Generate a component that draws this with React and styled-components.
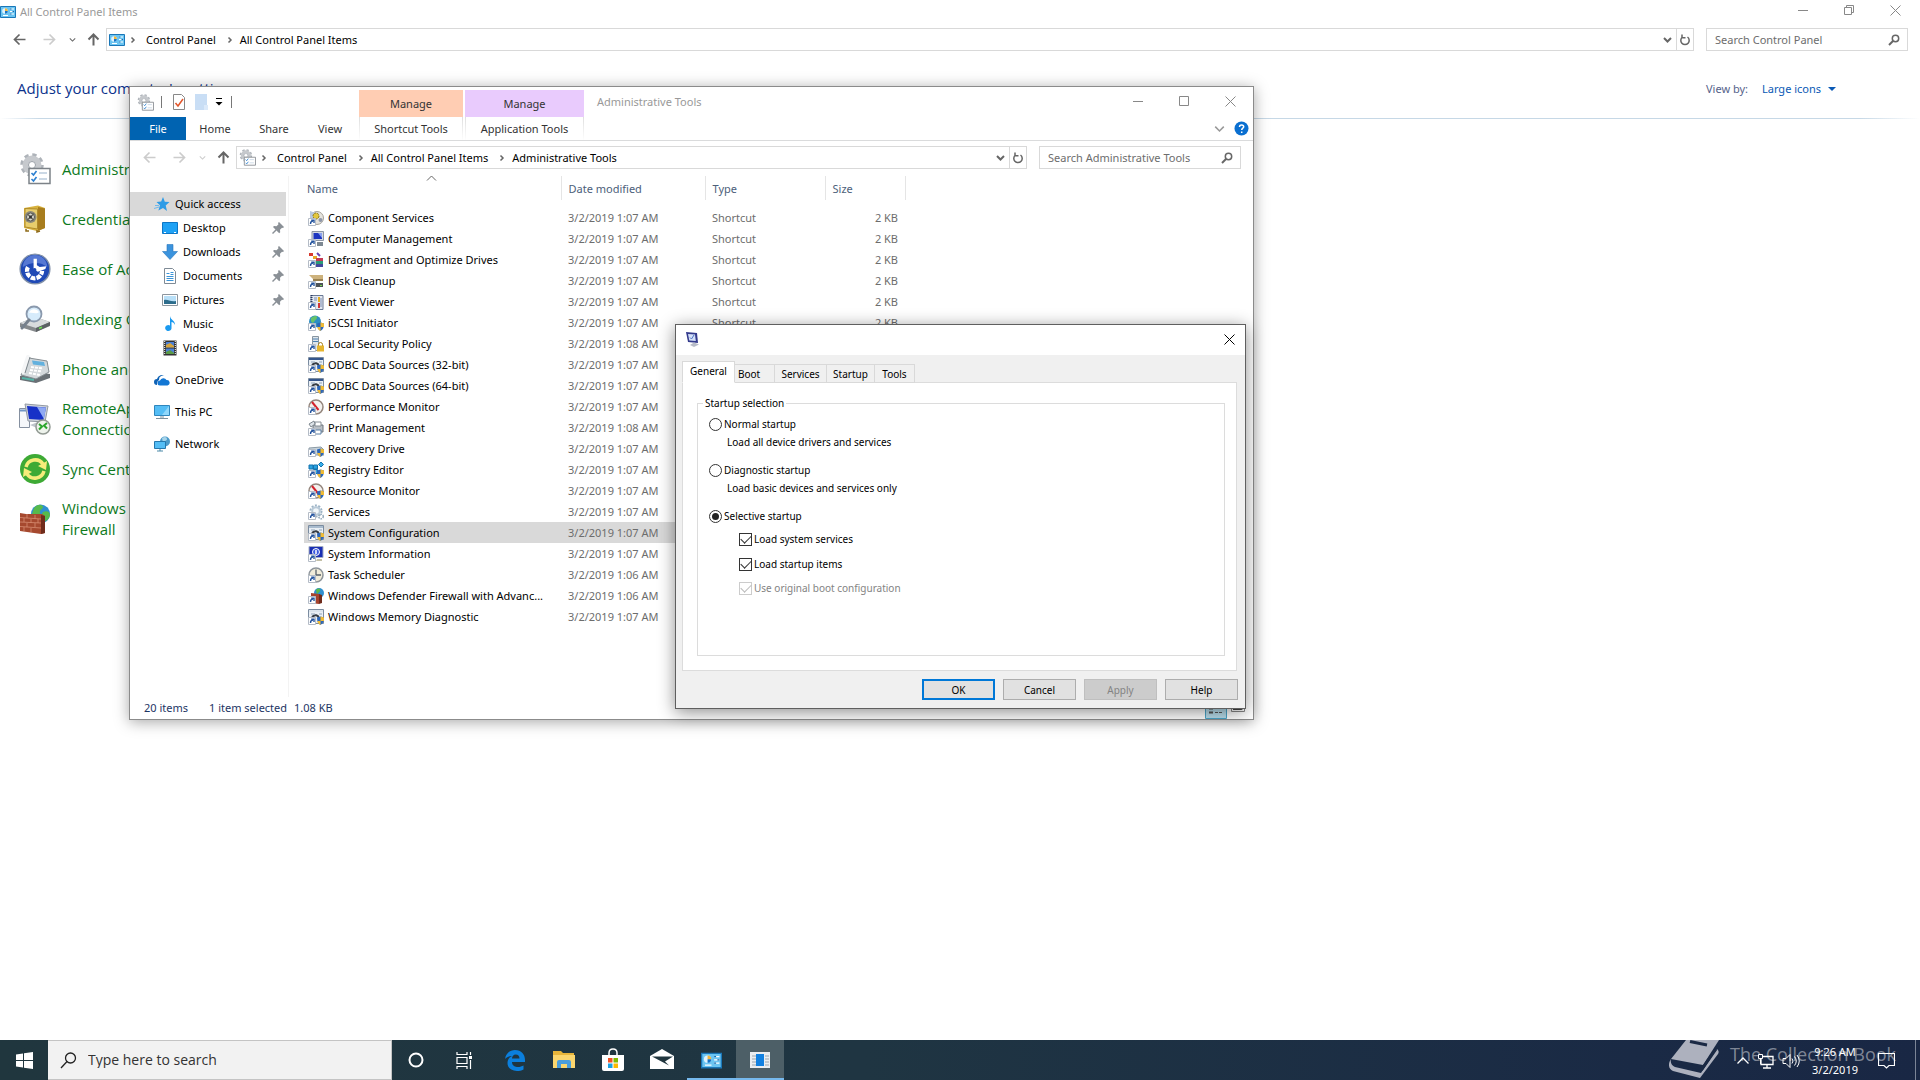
import React from 'react';
import styled, { createGlobalStyle } from 'styled-components';

const GlobalStyle = createGlobalStyle`
    * {
        box-sizing: border-box;
    }
    body {
        margin: 0;
        background: #fff;
        color: #000;
        font-family: "Noto Sans", "Open Sans", sans-serif;
        font-size: 11px;
        line-height: 16px;
    }
    button, input, select {
        font: inherit;
        color: inherit;
        padding: 0;
        margin: 0;
        border: 0;
        background: none;
    }
    svg {
        display: block;
        flex: none;
    }
`;

/* ---------- layout ---------- */

const Desktop = styled.div`
    position: relative;
    display: flex;
    flex-direction: column;
    min-height: 100vh;
    overflow: hidden;
`;

const ControlPanel = styled.main`
    flex: 1;
    display: flex;
    flex-direction: column;
`;

const TitleBar = styled.header`
    display: flex;
    align-items: center;
    height: ${props => props.$height}px;
    gap: 4px;
    color: #999;
`;

const TitleText = styled.h1`
    flex: 1;
    margin: 0;
    font-size: 11px;
    font-weight: 400;
`;

const Caption = styled.div`
    display: flex;
    align-self: flex-start;
    margin-right: ${props => props.$right || 0}px;
`;

const CaptionButton = styled.button`
    display: flex;
    align-items: center;
    justify-content: center;
    width: ${props => props.$width || 46}px;
    height: ${props => props.$height || 30}px;
    color: ${props => props.$dark ? '#000' : '#888'};
`;

const AddressRow = styled.div`
    display: flex;
    align-items: center;
    padding: 5px 12px 0 4px;
`;

const ArrowButton = styled.button`
    display: flex;
    align-items: center;
    justify-content: center;
    width: ${props => props.$width}px;
    height: 22px;
    color: ${props => props.$off ? '#ccc' : '#666'};
`;

const AddressBox = styled.nav`
    flex: 1;
    display: flex;
    align-items: center;
    height: 23px;
    padding-left: 2px;
    border: 1px solid #d9d9d9;
`;

const Crumbs = styled.div`
    flex: 1;
    display: flex;
    align-items: center;
    color: #666;
    svg + svg {
        margin: 0 3px 0 4px;
    }
`;

const Crumb = styled.a`
    display: flex;
    align-items: center;
    color: #000;
    text-decoration: none;
    padding: 0 10px 0 6px;
`;

const BoxButton = styled.button`
    display: flex;
    align-items: center;
    justify-content: center;
    width: 17px;
    height: 21px;
    color: #666;
    border-left: ${props => props.$line ? '1px solid #d9d9d9' : '0'};
`;

const SearchBox = styled.label`
    display: flex;
    align-items: center;
    width: 202px;
    height: 23px;
    margin-left: 12px;
    padding: 0 7px 0 8px;
    border: 1px solid #d9d9d9;
    color: #666;
`;

const SearchInput = styled.input`
    flex: 1;
    min-width: 0;
    outline: 0;
    &::placeholder {
        color: ${props => props.$color || '#6d6d6d'};
        opacity: 1;
    }
`;

const Heading = styled.div`
    display: flex;
    align-items: center;
    padding: 23px 84px 16px 17px;
`;

const Adjust = styled.h2`
    flex: 1;
    margin: 0;
    font-family: "Open Sans", sans-serif;
    font-size: 15px;
    line-height: 28px;
    font-weight: 400;
    color: #0b328c;
`;

const ViewLabel = styled.label`
    display: flex;
    align-items: center;
    gap: 14px;
    padding-top: 2px;
    color: #55628a;
`;

const ViewSelect = styled.select`
    appearance: none;
    width: 66px;
    color: #0a59b5;
    outline: 0;
`;

const Caret = styled.span`
    border: 4px solid transparent;
    border-top-color: #0a59b5;
    border-bottom: 0;
    margin-left: -14px;
`;

const Rule = styled.div`
    height: 1px;
    background: linear-gradient(to right, #fff, #c6d8e6 40px, #c6d8e6 calc(100% - 60px), #fff);
`;

const Items = styled.ul`
    display: flex;
    flex-direction: column;
    margin: 25px 0 0 19px;
    padding: 0;
    list-style: none;
`;

const Item = styled.a`
    display: flex;
    align-items: center;
    gap: 11px;
    width: 220px;
    height: 50px;
    font-family: "Open Sans", sans-serif;
    font-size: 15px;
    line-height: 21px;
    color: #0e7a1d;
    text-decoration: none;
`;

/* ---------- explorer window ---------- */

const ExplorerWindow = styled.section`
    position: absolute;
    left: 129px;
    top: 86px;
    width: 1125px;
    height: 634px;
    display: flex;
    flex-direction: column;
    background: #fff;
    border: 1px solid #8b8b8b;
    box-shadow: 0 2px 14px rgba(0, 0, 0, 0.35);
`;

const Ribbon = styled.div`
    display: flex;
    height: 54px;
    border-bottom: 1px solid #dadbdc;
`;

const RibbonLeft = styled.div`
    display: flex;
    flex-direction: column;
    width: 229px;
`;

const QuickBar = styled.div`
    display: flex;
    align-items: center;
    height: 30px;
    padding-left: 7px;
`;

const Divider = styled.span`
    width: 1px;
    height: 12px;
    margin: 0 ${props => props.$gap}px 0 7px;
    background: #777;
`;

const RibbonTabs = styled.div`
    display: flex;
`;

const RibbonTab = styled.button`
    width: ${props => props.$width}px;
    height: 23px;
    color: ${props => props.$file ? '#fff' : '#333'};
    background: ${props => props.$file ? '#0063b1' : 'none'};
`;

const ToolGroup = styled.div`
    display: flex;
    flex-direction: column;
    width: ${props => props.$width}px;
    margin: 3px 2px 0 0;
    text-align: center;
    span {
        height: 27px;
        line-height: 28px;
        color: #333;
        background: ${props => props.$color};
    }
    button {
        height: 23px;
        color: #333;
        border: 1px solid;
        border-width: 0 1px;
        border-image: linear-gradient(#ddd, #fff) 1;
    }
`;

const RibbonRight = styled.div`
    flex: 1;
    padding-left: 11px;
`;

const HelpRow = styled.div`
    display: flex;
    align-items: center;
    justify-content: flex-end;
    gap: 9px;
    height: 22px;
    padding-right: 4px;
    color: #999;
`;

const Columns = styled.div`
    flex: 1;
    display: flex;
    padding-top: 7px;
`;

const NavPane = styled.nav`
    width: 159px;
    padding-top: 16px;
    border-right: 1px solid #f3f3f3;
`;

const NavItem = styled.a`
    display: flex;
    align-items: center;
    gap: 5px;
    width: 156px;
    height: 24px;
    margin-bottom: ${props => props.$space ? 8 : 0}px;
    padding: 0 2px 0 ${props => props.$child ? 32 : 24}px;
    color: #000;
    text-decoration: none;
    background: ${props => props.$selected ? '#d9d9d9' : 'none'};
    span {
        flex: 1;
    }
`;

const FileTable = styled.table`
    align-self: flex-start;
    width: 601px;
    margin-left: 15px;
    border-collapse: collapse;
    table-layout: fixed;
    color: #6d6d6d;
`;

const HeadCell = styled.th`
    width: ${props => props.$width}px;
    height: 24px;
    padding: 2px 0 0 ${props => props.$first ? 3 : 7}px;
    border-right: 1px solid #e5e5e5;
    font-weight: 400;
    text-align: left;
    color: #4c607a;
`;

const SortMark = styled.svg`
    position: absolute;
    left: 296px;
    top: 88px;
`;

const FileRow = styled.tr`
    height: 21px;
    background: ${props => props.$selected ? '#d9d9d9' : 'none'};
`;

const Cell = styled.td`
    padding: 0 7px;
    text-align: ${props => props.$right ? 'right' : 'left'};
    white-space: nowrap;
`;

const NameCell = styled.td`
    padding: 0 0 0 4px;
    color: #000;
    div {
        display: flex;
        align-items: center;
        gap: 4px;
        white-space: nowrap;
    }
`;

const Spacer = styled.tr`
    height: 7px;
`;

const StatusBar = styled.footer`
    display: flex;
    align-items: center;
    height: 22px;
    padding: 0 8px 0 14px;
    color: #1d3564;
    span {
        margin-right: 21px;
    }
    span + span {
        margin-right: 7px;
    }
`;

const ViewButtons = styled.div`
    display: flex;
    align-items: flex-end;
    align-self: flex-end;
    gap: 4px;
    margin-left: auto;
`;

/* ---------- dialog ---------- */

const Dialog = styled.section`
    position: absolute;
    left: 675px;
    top: 324px;
    width: 571px;
    height: 385px;
    display: flex;
    flex-direction: column;
    background: #f0f0f0;
    border: 1px solid #5f5f5f;
    box-shadow: 0 3px 16px rgba(0, 0, 0, 0.45);
    font-size: 10px;
`;

const DialogTitle = styled.header`
    display: flex;
    align-items: flex-start;
    justify-content: space-between;
    height: 30px;
    padding-left: 8px;
    background: #fff;
`;

const DialogIcon = styled.span`
    padding-top: 6px;
`;

const Tabs = styled.div`
    display: flex;
    align-items: flex-end;
    height: 28px;
    margin: 0 8px -1px 6px;
`;

const Tab = styled.button`
    width: ${props => props.$width}px;
    height: ${props => props.$active ? 22 : 19}px;
    padding: 0 0 ${props => props.$active ? 2 : 0}px ${props => props.$start ? 3 : 0}px;
    text-align: ${props => props.$start ? 'left' : 'center'};
    border: 1px solid #d9d9d9;
    border-left-width: ${props => props.$active ? 1 : 0}px;
    border-bottom-color: ${props => props.$active ? '#fff' : '#d9d9d9'};
    background: ${props => props.$active ? '#fff' : '#f0f0f0'};
    z-index: 1;
`;

const Page = styled.div`
    flex: 1;
    margin: 0 8px 0 6px;
    padding: 12px 11px 14px 14px;
    background: #fff;
    border: 1px solid #dcdcdc;
    display: flex;
`;

const Group = styled.fieldset`
    flex: 1;
    margin: 0;
    padding: 3px 11px;
    border: 1px solid #dcdcdc;
    legend {
        margin-left: -6px;
        padding: 0 2px;
    }
`;

const Choice = styled.label`
    display: flex;
    align-items: center;
    gap: 2px;
    height: ${props => props.$height || 20}px;
    margin-left: ${props => props.$indent ? 30 : 0}px;
    color: ${props => props.$off ? '#838383' : '#000'};
`;

const Hint = styled.p`
    height: 26px;
    margin: 0 0 0 18px;
`;

const Radio = styled.input`
    appearance: none;
    display: grid;
    place-items: center;
    width: 13px;
    height: 13px;
    border: 1px solid #333;
    border-radius: 50%;
    background: #fff;
    &:checked::before {
        content: "";
        width: 7px;
        height: 7px;
        border-radius: 50%;
        background: #222;
    }
`;

const Check = styled.input`
    appearance: none;
    display: grid;
    place-items: center;
    width: 13px;
    height: 13px;
    border: 1px solid ${props => props.disabled ? '#ccc' : '#333'};
    background: #fff;
    &:checked::before {
        content: "";
        width: 9px;
        height: 5px;
        margin-bottom: 3px;
        border: solid ${props => props.disabled ? '#bbb' : '#333'};
        border-width: 0 0 1px 1px;
        transform: rotate(-45deg);
    }
`;

const Actions = styled.footer`
    display: flex;
    justify-content: flex-end;
    gap: 8px;
    padding: 8px 7px;
`;

const Action = styled.button`
    width: 73px;
    height: 21px;
    border: ${props => props.$primary ? '2px solid #0078d7' : '1px solid #adadad'};
    background: #e1e1e1;
    &:disabled {
        color: #838383;
        background: #ccc;
        border-color: #bfbfbf;
    }
`;

/* ---------- taskbar ---------- */

const Taskbar = styled.footer`
    position: relative;
    display: flex;
    height: 40px;
    color: #fff;
    background: linear-gradient(to right, #20363e, #1f3542 45%, #1a2a45 85%, #192744);
`;

const TaskSearch = styled.label`
    display: flex;
    align-items: center;
    gap: 11px;
    width: 344px;
    padding-left: 12px;
    background: #f2f2f2;
    border: 1px solid #c4c4c4;
    border-left: 0;
    font-family: "Open Sans", sans-serif;
    font-size: 14px;
    color: #222;
`;

const TaskButton = styled.button`
    display: flex;
    align-items: center;
    justify-content: center;
    width: ${props => props.$width || 49}px;
    height: 40px;
    color: #fff;
    background: ${props => props.$active ? '#4d5f67' : 'none'};
    box-shadow: ${props => props.$open ? 'inset 0 -2px #76b9ed' : 'none'};
`;

const Tray = styled.div`
    display: flex;
    align-items: center;
    margin-left: auto;
    padding-top: 2px;
    z-index: 1;
    svg {
        margin-right: 7px;
    }
`;

const Clock = styled.time`
    width: 56px;
    margin-right: 15px;
    font-size: 11px;
    line-height: 18px;
    text-align: center;
`;

const Peek = styled.span`
    width: 5px;
    height: 40px;
    margin-top: -2px;
    border-left: 1px solid #7b8496;
`;

const Watermark = styled.div`
    position: absolute;
    right: 24px;
    top: 0;
    display: flex;
    gap: 11px;
    font-family: "Open Sans", sans-serif;
    font-size: 18px;
    line-height: 28px;
    color: rgba(255, 255, 255, 0.45);
`;

/* ---------- icons ---------- */

const Svg = ({ w = 16, h = w, box, children, ...rest }) => (
    <svg width={w} height={h} viewBox={box || `0 0 ${w} ${h}`} fill="none" aria-hidden="true" {...rest}>
        {children}
    </svg>
);

const Back = () => <Svg w={13}><path d="M6.5 1.5l-5 5 5 5M1.5 6.5h11" stroke="currentColor" strokeWidth="1.7" /></Svg>;
const Forward = () => <Svg w={13}><path d="M6.5 1.5l5 5-5 5M.5 6.5h11" stroke="currentColor" strokeWidth="1.7" /></Svg>;
const Up = () => <Svg w={13}><path d="M1.500 6.500l5-5 5 5M6.500 1.500v11" stroke="currentColor" strokeWidth="2" /></Svg>;
const Right = () => <Svg w={8}><path d="M2.500 1.500l2.500 2.500-2.500 2.500" stroke="currentColor" strokeWidth="1.500" /></Svg>;
const Down = ({ size = 9, bold }) => <Svg w={size} box="0 0 9 9"><path d="M1 3l3.500 3.500L8 3" stroke="currentColor" strokeWidth={bold ? 2 : 1.3} /></Svg>;
const Refresh = () => <Svg w={12}><path d="M3.500 3a4.200 4.200 0 1 0 5 0M3 .5v3.200h3.500" stroke="currentColor" strokeWidth="1.500" /></Svg>;
const Magnifier = () => <Svg w={12}><circle cx="7.500" cy="4.500" r="3.200" stroke="currentColor" strokeWidth="1.500" /><path d="M5 7L1 11" stroke="currentColor" strokeWidth="2" /></Svg>;
const Minimize = () => <Svg w={11}><path d="M0 5.500h10" stroke="currentColor" /></Svg>;
const Maximize = () => <Svg w={11}><path d="M.5.5h9v9h-9z" stroke="currentColor" /></Svg>;
const Restore = () => <Svg w={11}><path d="M.5 2.500h7v7h-7zM2.500 2.500v-2h7v7h-2" stroke="currentColor" /></Svg>;
const Close = () => <Svg w={11}><path d="M.5.5l10 10M10.500.5l-10 10" stroke="currentColor" /></Svg>;
const Pin = () => <Svg w={12}><path d="M7 0l5 5-1 1-1-.3-2 2 .2 2.500-1 1L4.500 8.500 1 12 0 11l3.500-3.500L1 5l1-1 2.500.2 2-2L6 1z" fill="#8a9096" /></Svg>;

const PanelIcon = ({ size = 16 }) => (
    <Svg w={size} box="0 0 16 16">
        <path d="M.5 2.500h15v11H.5z" fill="#6bc5f2" stroke="#1a77b8" />
        <circle cx="5" cy="7" r="2.800" fill="#dff3fd" />
        <path d="M5 7V4.200A2.800 2.800 0 0 1 7.800 7z" fill="#f4b63c" />
        <path d="M5 7h2.800A2.800 2.800 0 0 1 5 9.800z" fill="#1773c5" />
        <path d="M10 5h4M10 7.500h4M10 10h4M3 11.500h5" stroke="#fff" />
        <path d="M10 5h1.500M12.500 7.500H14M10 10h1.500" stroke="#1a69ac" />
    </Svg>
);

const GearIcon = ({ size = 16 }) => (
    <Svg w={size} box="0 0 32 32">
        <circle cx="13" cy="12" r="10" stroke="#aeb3b9" strokeWidth="3.500" strokeDasharray="4.200 3.650" />
        <circle cx="13" cy="12" r="6.500" stroke="#c6c9cd" strokeWidth="6" />
        <circle cx="13" cy="12" r="3.500" fill="#fff" stroke="#999fa6" />
        <path d="M10 15.500h21v15H10z" fill="#fff" stroke="#7c8288" strokeWidth="1.500" />
        <path d="M12.500 20l2 2 3-4M12.500 26l2 2 3-4" stroke="#2b7fd0" strokeWidth="1.600" />
        <path d="M20 20h8M20 26h8" stroke="#bcd" strokeWidth="1.300" />
    </Svg>
);

const SafeIcon = () => (
    <Svg w={32}>
        <path d="M5 5l14-2.500 7 2.500v20l-8 3L5 25z" fill="#d8b23e" />
        <path d="M19 4l7 1.500V25l-7 3z" fill="#a87d1e" />
        <path d="M6 5.500L18.500 6v20L6 24z" fill="#e8cd6c" stroke="#b08b2a" />
        <circle cx="11.500" cy="14" r="6" fill="#8d8a7a" />
        <circle cx="11.500" cy="14" r="4" fill="#d9d9cf" stroke="#555" />
        <path d="M8 17.500l7-7M8.500 11l6 6" stroke="#66655c" strokeWidth="1.500" />
        <circle cx="11.500" cy="14" r="1.500" fill="#333" />
        <path d="M7 26v2h3M18 27v2l3-1" stroke="#8f6b19" strokeWidth="1.500" />
    </Svg>
);

const EaseIcon = () => (
    <Svg w={32} box="0 0 34 34">
        <circle cx="17" cy="17" r="15.800" fill="#1f49b6" stroke="#8190a8" strokeWidth="1.500" />
        <path d="M4 15A13 13 0 0 1 30 15C24 9 12 9 4 15z" fill="#6c8de0" opacity=".7" />
        <path d="M9.500 15a8 8 0 1 0 15 4" stroke="#fff" strokeWidth="4.500" strokeDasharray="5 1.200" />
        <path d="M15.500 17V6h3.500v7l3 2 7-1-1 3-8 3z" fill="#fff" />
        <circle cx="16.500" cy="18" r="2" fill="#1f49b6" />
    </Svg>
);

const IndexIcon = () => (
    <Svg w={32}>
        <path d="M1 20l15-6 15 5v4l-14 6L1 24z" fill="#85898c" />
        <path d="M1 20l15-6 15 5-14 6z" fill="#d8dbdd" />
        <path d="M17 25l14-6v3.500L17 29z" fill="#5c6164" />
        <path d="M20 25.500l3-1.200" stroke="#6de052" strokeWidth="1.500" />
        <circle cx="15" cy="11" r="7.500" fill="#d6ebfb" stroke="#8a99ad" strokeWidth="1.800" />
        <path d="M10 10a5.500 5.500 0 0 1 10-1c-3 3-6 0-10 1z" fill="#fff" />
        <path d="M10 17L3 25" stroke="#76808c" strokeWidth="3" strokeLinecap="round" />
    </Svg>
);

const PhoneIcon = () => (
    <Svg w={32}>
        <path d="M1 23l16-4 14 2v4l-14 5L1 27z" fill="#697075" />
        <path d="M2 22L10 5l18 3 2 11-13 7z" fill="#d4d9dc" stroke="#858d92" />
        <path d="M13 7.500l12 1.500 1 4-12-1.500z" fill="#63b1de" />
        <path d="M12 14l12 1.500M11 17l12 1.500M10 20l11 2" stroke="#fff" strokeWidth="2" strokeDasharray="3 1" />
        <path d="M9 4L4 19" stroke="#f5f6f7" strokeWidth="4" strokeLinecap="round" />
        <path d="M11 4L6 20" stroke="#7c858b" />
        <path d="M3 25l12 2" stroke="#57b4a8" strokeWidth="2" />
    </Svg>
);

const RemoteIcon = () => (
    <Svg w={32}>
        <path d="M.5 5.500h10v19H.5z" fill="#f5f7fa" stroke="#8590a0" />
        <path d="M1 7.500h9" stroke="#7196c5" strokeWidth="2" />
        <path d="M6 1l23 2-3 16-17-1z" fill="#cfd4dc" stroke="#9299a3" />
        <path d="M8 3l19 1.500-2.500 12.500L10 16z" fill="#1731c7" />
        <path d="M18 4l9 .6L25 16z" fill="#8fa9f3" />
        <path d="M11 22l8-3 6 3-7 3z" fill="#bfc5cc" />
        <circle cx="24" cy="24" r="7" fill="#eef3ec" stroke="#929a93" strokeWidth="1.500" />
        <path d="M20 21l3 2.500-3 3M28 20l-3 2.500 3 3" stroke="#2ba52c" strokeWidth="2" />
    </Svg>
);

const SyncIcon = () => (
    <Svg w={32}>
        <circle cx="16" cy="16" r="15" fill="#3eaa35" />
        <path d="M7 14a9.500 9.500 0 0 1 17-3M25 18a9.500 9.500 0 0 1-17 3" stroke="#f6ec7a" strokeWidth="3.500" />
        <path d="M28 8l-1 9-8-4zM4 24l1-9 8 4z" fill="#f6ec7a" />
    </Svg>
);

const FirewallIcon = ({ size = 32 }) => (
    <Svg w={size} box="0 0 32 32">
        <circle cx="21.500" cy="11" r="9.500" fill="#2f8fd0" />
        <path d="M15 5c4-5 9-3 9-1s-4 3-3 6-4 4-8 1zM24 9c4-2 7 0 7 3s-4 7-6 6-3-7-1-9z" fill="#57ba4c" />
        <path d="M1 10l6 1 16 0 3 2v17l-4 1-21-3z" fill="#a6492f" />
        <path d="M22 12l4 1v17l-4 1z" fill="#6f2c1c" />
        <path d="M1 14.500l21 1.500M1 19l21 1M1 23.500l21 1.500M8 11v4M16 12v4M5 15v4M12 16v4M19 16v4M8 20v4M16 20v4M5 24v4M12 25v4" stroke="#d78d72" strokeWidth=".8" />
    </Svg>
);

/* sidebar icons */
const StarIcon = () => <Svg><path d="M9 1l1.800 4.800L15.500 6l-3.800 3.400L13 15 9 12l-4.600 2.500L6 9.300 2.500 6l4.700-.4z" fill="#2d9be6" /><path d="M0 12.500l5-1.500M1 9.500h4" stroke="#6fb8ec" /></Svg>;
const DesktopIcon = () => <Svg><path d="M.5 2.500h15v11H.5z" fill="#1fa2f5" stroke="#0d76c6" /><path d="M2 12.500h2M12 12.500h2" stroke="#fff" /></Svg>;
const DownIcon = () => <Svg><path d="M5 .5h6v7h4.500L8 15.500.5 7.500H5z" fill="#3b93dd" stroke="#2877bd" strokeWidth=".6" /></Svg>;
const DocIcon = () => <Svg><path d="M2.500.5h8l3 3v12h-11z" fill="#fff" stroke="#7f8b96" /><path d="M4.500 5.500h3M8.500 4.500h3M8.500 6.500h3M4.500 8.500h7M4.500 10.500h7M4.500 12.500h7" stroke="#3a94d8" /></Svg>;
const PicIcon = () => <Svg><path d="M.5 2.500h15v11H.5z" fill="#fff" stroke="#8d969e" /><path d="M2 4h12v8H2z" fill="#b9e0f8" /><path d="M2 8c4-1 6 2 12 1v3H2z" fill="#2d6d8c" /></Svg>;
const MusicIcon = () => <Svg><path d="M8 0c.5 4 5 4 5 9-1-2-2-3-3.500-3v6.500a3.200 3 0 1 1-1.500-3z" fill="#1a9af0" /></Svg>;
const VideoIcon = () => <Svg><path d="M1.500.5h13v15h-13z" fill="#333" /><path d="M4 2h8v5.500H4zM4 8.500h8V14H4z" fill="#4a7fd6" /><path d="M4 5l4-2 4 3v1.500H4z" fill="#d7a53b" /><path d="M4 12l4-2 4 3v1H4z" fill="#5a9b46" /><path d="M2.700 1v14M13.300 1v14" stroke="#fff" strokeDasharray="1 1" /></Svg>;
const CloudIcon = () => <Svg><path d="M3 13a3 3 0 0 1 0-6 5 5 0 0 1 8.500-2.500A4 4 0 0 0 5 8c-2 1-2 3-2 5z" fill="#0f62b5" /><path d="M6 13.500a2.500 2.500 0 0 1 0-5 3.600 3.600 0 0 1 6.500-.5 2.800 2.800 0 0 1 1 5.500z" fill="#1377d4" /></Svg>;
const PcIcon = () => <Svg><path d="M.5 1.500h15v10H.5z" fill="#54bdf5" stroke="#2f86bd" /><path d="M8 11L15 2v9z" fill="#8fd7fb" /><path d="M2 14.500h12M6 13h4" stroke="#7d919e" /></Svg>;
const NetIcon = () => <Svg><circle cx="11" cy="5.500" r="5" fill="#4b9ac9" /><path d="M8 2c3-2 5-1 5 1s-3 2-4 4z" fill="#a7d4ea" /><path d="M.5 5.500h11v7H.5z" fill="#54bdf5" stroke="#2678ad" /><path d="M3 15h6M6 13v2" stroke="#4d8aa9" /></Svg>;

/* file icons: a 16px drawing with the shortcut arrow over its corner */
const shield = (
    <g>
        <path d="M9 8.500l3.500-1 3.500 1c0 4-1 6-3.500 7.500C10 14.500 9 12.500 9 8.500z" fill="#2c66b8" />
        <path d="M12.500 7.500l3.500 1V12h-3.500zM12.500 12v4C10.500 15 9.500 13.500 9.200 12z" fill="#f0bb35" />
    </g>
);
const gauge = (
    <g>
        <circle cx="8" cy="8" r="7" fill="#f3f1ee" stroke="#93857c" strokeWidth="1.500" />
        <path d="M4 3l6.500 8" stroke="#d3222c" strokeWidth="2" />
    </g>
);
const appWindow = (head) => (
    <g>
        <path d="M.5.5h15v14H.5z" fill="#e9eff5" stroke="#7b8ca0" />
        <path d="M1 2h14" stroke={head} strokeWidth="2" />
        <path d="M4 8c3-3 6-2 7 1" stroke="#363c44" strokeWidth="2" />
        <path d="M3 5h4M11 5h3" stroke="#8fa3b8" />
    </g>
);
const screen = (
    <g>
        <path d="M4 .5h11.500v9H4z" fill="#d3d8e0" stroke="#8c95a5" />
        <path d="M5.500 2H14v6H5.500z" fill="#1d35c0" />
        <path d="M10 2h4v5z" fill="#8aa0ee" />
        <path d="M9 11h6v4H9z" fill="#7d8892" />
    </g>
);

const art = {
    component: <g><circle cx="9" cy="8" r="6.500" fill="#e5e3dd" stroke="#a5a29a" /><path d="M2 1l6 2v8H2z" fill="#b8c7df" /><circle cx="8" cy="6" r="3" fill="#e2c63d" stroke="#8c7a1f" strokeDasharray="2 1" /><circle cx="12.500" cy="10" r="2" fill="#8d96a8" /></g>,
    computer: screen,
    defrag: <g><path d="M1 1h4v3H1z" fill="#d8392d" /><path d="M5 4h4v3H5z" fill="#e9a826" /><path d="M9 1l3 3" stroke="#663fb1" strokeWidth="2" /><path d="M8 6h7v3H8z" fill="#c53a55" /><path d="M8 9h7v3H8z" fill="#2c9b79" /><path d="M8 12h7v3H8z" fill="#44489c" /></g>,
    cleanup: <g><path d="M1 2h14v4H5z" fill="#cdb27c" /><path d="M5 6h10v2H5z" fill="#9b8251" /><path d="M7 10h8v4H7z" fill="#4c5357" /><path d="M12 12.500h2" stroke="#78da55" /></g>,
    event: <g><path d="M3 1.500h12v14H3z" fill="#e3e8f0" stroke="#6a7995" /><path d="M3.500 1v14" stroke="#29395c" strokeDasharray="1 1" strokeWidth="2" /><path d="M11 3v5" stroke="#e5ae20" strokeWidth="2" /><path d="M11 9v5" stroke="#d13434" strokeWidth="2" /><path d="M6 4h3M6 6h3M13 4v9" stroke="#7d8db3" /></g>,
    iscsi: <g><circle cx="7" cy="6.500" r="6" fill="#2d8ec3" /><path d="M3 3c4-3 7-2 6 0S7 5 6 7s-4 0-3-4z" fill="#66c26a" />{shield}</g>,
    policy: <g><path d="M4.500.5h6v14h-6z" fill="#dfe5ea" stroke="#8795a0" /><path d="M5 3h5M5 5.500h5" stroke="#4b7fb0" /><path d="M10.500 10V8.500a2 2 0 0 1 4 0V10" stroke="#a68220" /><path d="M9 9.500h7v6H9z" fill="#e6b52e" /></g>,
    odbc: <g>{appWindow('#35568c')}{shield}</g>,
    perf: gauge,
    print: <g><path d="M5 5h10v7H5z" fill="#b9bfc5" stroke="#6f777e" /><path d="M7 2h6v4H7z" fill="#fff" stroke="#868e95" /><path d="M7 10h6v4H7z" fill="#fff" stroke="#5b7fa3" /><path d="M1 4l5-3 1 3-4 3z" fill="#dde3e8" stroke="#7f8890" /></g>,
    recovery: <g><path d="M1 7l12-1 3 3v5H1z" fill="#c6d3dc" stroke="#8b9aa5" />{shield}</g>,
    registry: <g><path d="M1 3h4v4H1zM5.500 3h4v4h-4zM5.500 7.500h4v4h-4z" fill="#2aa2e0" stroke="#1473ae" /><path d="M13 0l2.500 2.500L13 5l-2.500-2.500z" fill="#39aee9" stroke="#1473ae" />{shield}</g>,
    resource: <g>{gauge}{shield}</g>,
    services: <g><circle cx="8" cy="7" r="5.500" stroke="#9db4c6" strokeWidth="2" strokeDasharray="2 1.450" /><circle cx="8" cy="7" r="3.800" stroke="#b9cad8" strokeWidth="2" fill="#f2f7fa" /><circle cx="13" cy="12.500" r="2.300" stroke="#94aabb" strokeWidth="1.500" strokeDasharray="1.500 .8" /></g>,
    config: <g>{appWindow('#a9bccf')}{shield}</g>,
    info: <g><path d="M1 .5h14v11H1z" fill="#1a2fb3" stroke="#a5aec4" /><circle cx="8" cy="6" r="3.500" stroke="#fff" fill="#3c5ae0" /><path d="M8 4v4" stroke="#fff" strokeWidth="1.500" /><path d="M9 13h5v2H8z" fill="#c3bfa6" /></g>,
    task: <g><circle cx="8" cy="8" r="7" fill="#f1ecd9" stroke="#8e959b" strokeWidth="1.500" /><path d="M8 2.500V8h5" stroke="#58626b" strokeWidth="1.300" /></g>,
    firewall: <g><circle cx="11" cy="5" r="5" fill="#2f8fd0" /><path d="M8 2c3-3 5-1 4 1s-2 1-3 4z" fill="#57ba4c" /><path d="M3 5l8 1v10l-8-1z" fill="#a6432d" /><path d="M11 6l3 1v8l-3 1z" fill="#6f2c1c" /></g>,
    memory: <g>{appWindow('#dbe4ec')}{shield}</g>,
};

const FileIcon = ({ kind }) => (
    <Svg>
        {art[kind]}
        <path d="M.5 8.500h7v7h-7z" fill="#fff" stroke="#b5bcc6" />
        <path d="M2.500 14c0-2 .5-3 2.500-3M3.200 10.200H6V13" stroke="#24549e" strokeWidth="1.400" />
    </Svg>
);

/* ---------- data ---------- */

const panelItems = [
    { name: 'Administrative Tools', icon: <GearIcon size={32} /> },
    { name: 'Credential Manager', icon: <SafeIcon /> },
    { name: 'Ease of Access Center', icon: <EaseIcon /> },
    { name: 'Indexing Options', icon: <IndexIcon /> },
    { name: 'Phone and Modem', icon: <PhoneIcon /> },
    { name: 'RemoteApp and Desktop Connections', icon: <RemoteIcon /> },
    { name: 'Sync Center', icon: <SyncIcon /> },
    { name: 'Windows Defender Firewall', icon: <FirewallIcon /> },
];

const navItems = [
    { name: 'Quick access', icon: <StarIcon />, selected: true },
    { name: 'Desktop', icon: <DesktopIcon />, child: true, pin: true },
    { name: 'Downloads', icon: <DownIcon />, child: true, pin: true },
    { name: 'Documents', icon: <DocIcon />, child: true, pin: true },
    { name: 'Pictures', icon: <PicIcon />, child: true, pin: true },
    { name: 'Music', icon: <MusicIcon />, child: true },
    { name: 'Videos', icon: <VideoIcon />, child: true, space: true },
    { name: 'OneDrive', icon: <CloudIcon />, space: true },
    { name: 'This PC', icon: <PcIcon />, space: true },
    { name: 'Network', icon: <NetIcon /> },
];

const files = [
    ['component', 'Component Services', '1:07'],
    ['computer', 'Computer Management', '1:07'],
    ['defrag', 'Defragment and Optimize Drives', '1:07'],
    ['cleanup', 'Disk Cleanup', '1:07'],
    ['event', 'Event Viewer', '1:07'],
    ['iscsi', 'iSCSI Initiator', '1:07'],
    ['policy', 'Local Security Policy', '1:08'],
    ['odbc', 'ODBC Data Sources (32-bit)', '1:07'],
    ['odbc', 'ODBC Data Sources (64-bit)', '1:07'],
    ['perf', 'Performance Monitor', '1:07'],
    ['print', 'Print Management', '1:08'],
    ['recovery', 'Recovery Drive', '1:07'],
    ['registry', 'Registry Editor', '1:07'],
    ['resource', 'Resource Monitor', '1:07'],
    ['services', 'Services', '1:07'],
    ['config', 'System Configuration', '1:07'],
    ['info', 'System Information', '1:07'],
    ['task', 'Task Scheduler', '1:06'],
    ['firewall', 'Windows Defender Firewall with Advanc...', '1:06'],
    ['memory', 'Windows Memory Diagnostic', '1:07'],
];

/* ---------- components ---------- */

const Address = ({ icon, path, search, off }) => (
    <AddressRow>
        <ArrowButton $width={30} $off={off} aria-label="Back"><Back /></ArrowButton>
        <ArrowButton $width={30} $off aria-label="Forward"><Forward /></ArrowButton>
        <ArrowButton $width={16} $off={off} aria-label="Recent locations"><Down size={7} /></ArrowButton>
        <ArrowButton $width={26} aria-label="Up"><Up /></ArrowButton>
        <AddressBox>
            <Crumbs>
                {icon}
                <Right />
                {path.map((name, index) => (
                    <React.Fragment key={`Crumb-${index}`}>
                        {index > 0 && <Right />}
                        <Crumb href="#">{name}</Crumb>
                    </React.Fragment>
                ))}
            </Crumbs>
            <BoxButton aria-label="Previous locations"><Down bold /></BoxButton>
            <BoxButton $line aria-label="Refresh"><Refresh /></BoxButton>
        </AddressBox>
        <SearchBox>
            <SearchInput type="text" placeholder={search} aria-label={search} />
            <Magnifier />
        </SearchBox>
    </AddressRow>
);

const Explorer = () => (
    <ExplorerWindow>
        <Ribbon>
            <RibbonLeft>
                <QuickBar>
                    <GearIcon size={17} />
                    <Divider $gap={10} />
                    <Svg w={14} h={16}><path d="M1.500.5h8l3 3v12h-11z" fill="#fff" stroke="#888" /><path d="M3.500 9l2.500 3 5-7" stroke="#e2562b" strokeWidth="1.500" /></Svg>
                    <Svg w={24} h={16}><path d="M9 0h12v16H9z" fill="#c9def5" /><path d="M18 11h4v5h-4z" fill="#dceafa" /></Svg>
                    <Svg w={14} h={10}><path d="M6 1.500h6" stroke="#000" /><path d="M5.500 5h7L9 8.500z" fill="#000" /></Svg>
                    <Divider $gap={0} />
                </QuickBar>
                <RibbonTabs>
                    <RibbonTab $width={56} $file>File</RibbonTab>
                    <RibbonTab $width={58}>Home</RibbonTab>
                    <RibbonTab $width={60}>Share</RibbonTab>
                    <RibbonTab $width={52}>View</RibbonTab>
                </RibbonTabs>
            </RibbonLeft>
            <ToolGroup $width={104} $color="#ffcdb3">
                <span>Manage</span>
                <button>Shortcut Tools</button>
            </ToolGroup>
            <ToolGroup $width={119} $color="#e9cbfd">
                <span>Manage</span>
                <button>Application Tools</button>
            </ToolGroup>
            <RibbonRight>
                <TitleBar $height={30}>
                    <TitleText>Administrative Tools</TitleText>
                    <Caption>
                        <CaptionButton $height={29} aria-label="Minimize"><Minimize /></CaptionButton>
                        <CaptionButton $height={29} aria-label="Maximize"><Maximize /></CaptionButton>
                        <CaptionButton $height={29} aria-label="Close"><Close /></CaptionButton>
                    </Caption>
                </TitleBar>
                <HelpRow>
                    <Down size={11} />
                    <Svg w={15}><circle cx="7.500" cy="7.500" r="7" fill="#0a6fd0" /><path d="M5.500 6c0-3 4.200-2.500 4.200-.3 0 1.500-2 1.500-2 3.300M7.700 10.500V12" stroke="#fff" strokeWidth="1.500" /></Svg>
                </HelpRow>
            </RibbonRight>
        </Ribbon>
        <Address
            off
            icon={<GearIcon size={17} />}
            path={['Control Panel', 'All Control Panel Items', 'Administrative Tools']}
            search="Search Administrative Tools"
        />
        <Columns>
            <NavPane>
                {navItems.map((item, index) => (
                    <NavItem
                        key={`Nav-${index}`}
                        href="#"
                        $child={item.child}
                        $space={item.space}
                        $selected={item.selected}
                    >
                        {item.icon}
                        <span>{item.name}</span>
                        {item.pin && <Pin />}
                    </NavItem>
                ))}
            </NavPane>
            <FileTable>
                <thead>
                    <tr>
                        <HeadCell $width={257} $first>Name</HeadCell>
                        <HeadCell $width={144}>Date modified</HeadCell>
                        <HeadCell $width={120}>Type</HeadCell>
                        <HeadCell $width={80}>Size</HeadCell>
                    </tr>
                </thead>
                <tbody>
                    <Spacer />
                    {files.map(([kind, name, time], index) => (
                        <FileRow key={`File-${index}`} $selected={kind === 'config'}>
                            <NameCell><div><FileIcon kind={kind} />{name}</div></NameCell>
                            <Cell>{`3/2/2019 ${time} AM`}</Cell>
                            <Cell>Shortcut</Cell>
                            <Cell $right>2 KB</Cell>
                        </FileRow>
                    ))}
                </tbody>
            </FileTable>
            <SortMark width="11" height="6" viewBox="0 0 11 6" fill="none"><path d="M1 5.500l4.500-4.500L10 5.500" stroke="#666" /></SortMark>
        </Columns>
        <StatusBar>
            <span>20 items</span>
            <span>1 item selected</span>
            <span>1.08 KB</span>
            <ViewButtons>
                <Svg w={22} h={20}><path d="M.5.5h21v19H.5z" fill="#b9deec" stroke="#4ba6c9" /><path d="M4 5.500h4M4 9.500h4M4 13.500h4" stroke="#555" strokeWidth="2" /><path d="M10 5.500h7M10 9.500h7M10 13.500h7" stroke="#555" strokeDasharray="3 1" /></Svg>
                <Svg w={14} h={20}><path d="M.5 1.500h13v11H.5z" fill="#fff" stroke="#888" /><path d="M2 10l4-3 6 4H2z" fill="#444" /></Svg>
            </ViewButtons>
        </StatusBar>
    </ExplorerWindow>
);

const ConfigDialog = () => (
    <Dialog>
        <DialogTitle>
            <DialogIcon>
                <Svg w={17}><path d="M2 1l11 1 1 10-10-1z" fill="#333a8c" /><path d="M4 3l7 .5.8 6.500-6.500-.5z" fill="#d4e0f8" /><path d="M6 6.500l1.500 1.500 2.500-4" stroke="#4f74c5" /><path d="M6 14l4-2.500 5 2-5 2.500z" fill="#b8bcc8" /></Svg>
            </DialogIcon>
            <CaptionButton $width={31} $height={28} $dark aria-label="Close"><Close /></CaptionButton>
        </DialogTitle>
        <Tabs>
            <Tab $width={53} $active>General</Tab>
            <Tab $width={40} $start>Boot</Tab>
            <Tab $width={52}>Services</Tab>
            <Tab $width={48}>Startup</Tab>
            <Tab $width={40}>Tools</Tab>
        </Tabs>
        <Page>
            <Group>
                <legend>Startup selection</legend>
                <Choice><Radio type="radio" name="startup" />Normal startup</Choice>
                <Hint>Load all device drivers and services</Hint>
                <Choice><Radio type="radio" name="startup" />Diagnostic startup</Choice>
                <Hint>Load basic devices and services only</Hint>
                <Choice><Radio type="radio" name="startup" defaultChecked />Selective startup</Choice>
                <Choice $indent $height={26}><Check type="checkbox" defaultChecked />Load system services</Choice>
                <Choice $indent $height={24}><Check type="checkbox" defaultChecked />Load startup items</Choice>
                <Choice $indent $height={24} $off><Check type="checkbox" defaultChecked disabled />Use original boot configuration</Choice>
            </Group>
        </Page>
        <Actions>
            <Action $primary>OK</Action>
            <Action>Cancel</Action>
            <Action disabled>Apply</Action>
            <Action>Help</Action>
        </Actions>
    </Dialog>
);

const Tasks = () => (
    <Taskbar>
        <TaskButton $width={48} aria-label="Start">
            <Svg w={17}><path d="M0 2.500l7-1V8H0zM8 1.300L17 0v8H8zM0 9h7v6.500l-7-1zM8 9h9v8l-9-1.300z" fill="#fff" /></Svg>
        </TaskButton>
        <TaskSearch>
            <Svg w={17}><circle cx="10.500" cy="6" r="5" stroke="#222" strokeWidth="1.300" /><path d="M7 9.500L1 16" stroke="#222" strokeWidth="1.300" /></Svg>
            <SearchInput $color="#333" type="text" placeholder="Type here to search" aria-label="Type here to search" />
        </TaskSearch>
        <TaskButton $width={48} aria-label="Cortana">
            <Svg w={18}><circle cx="9" cy="9" r="6.500" stroke="#fff" strokeWidth="2" /></Svg>
        </TaskButton>
        <TaskButton aria-label="Task View">
            <Svg w={17}><path d="M1 0v2.500h10V0M1 17v-2.500h10V17M1 5.500h10v6H1zM14.500 0v3M14.500 8v9" stroke="#fff" strokeWidth="1.200" /><path d="M13 4h3v3h-3z" fill="#fff" /></Svg>
        </TaskButton>
        <TaskButton $width={51} aria-label="Edge">
            <Svg w={22}><path d="M1 10C2 3.500 6.500 1 11 1c6.500 0 10 4.500 10 10v2H8c0 4 3.500 5 6 5 2 0 4-.6 5.500-1.500v4c-2 1-4 1.500-6.500 1.500-5.500 0-9.500-3-9.500-8C3.500 10.500 5.500 8 8 7 4.500 7 2 8.500 1 10zM8 9.500h7.500c0-2.500-1.500-4-3.700-4C9.500 5.500 8 7.300 8 9.500z" fill="#0b7fdd" /></Svg>
        </TaskButton>
        <TaskButton $width={48} aria-label="File Explorer">
            <Svg w={22}><path d="M0 2h8l2 2h11v15H0z" fill="#e8b53a" /><path d="M0 6h22v13H0z" fill="#fbd66e" /><path d="M4 19v-6q0-2 2-2h10q2 0 2 2v6h-4v-4H8v4z" fill="#4a9ddb" /></Svg>
        </TaskButton>
        <TaskButton aria-label="Store">
            <Svg w={24}><path d="M1 7h22v14q0 2-2 2H3q-2 0-2-2z" fill="#fff" /><path d="M8 9V5q0-4 4-4t4 4v4" stroke="#fff" strokeWidth="1.500" /><path d="M7 10h4.500v4.500H7z" fill="#f15125" /><path d="M12.500 10H17v4.500h-4.500z" fill="#7fba00" /><path d="M7 15.500h4.500V20H7z" fill="#1ba1e2" /><path d="M12.500 15.500H17V20h-4.500z" fill="#fdb900" /></Svg>
        </TaskButton>
        <TaskButton $width={50} aria-label="Mail">
            <Svg w={24}><path d="M0 8l12-7 12 7v13H0z" fill="#fff" /><path d="M2 8.500h21l-8 5 4 4z" fill="#21363f" /></Svg>
        </TaskButton>
        <TaskButton $open aria-label="Control Panel"><PanelIcon size={21} /></TaskButton>
        <TaskButton $width={48} $open $active aria-label="System Configuration">
            <Svg w={20}><path d="M0 2h20v16H0z" fill="#e9edf0" /><path d="M2 6h4M2 9h4M2 12h4M2 15h4M15 6h4M15 9h4M15 12h4M15 15h4" stroke="#9aa5ad" /><path d="M6 4h8v12H6z" fill="#1180e0" /></Svg>
        </TaskButton>
        <Watermark>
            <Svg w={50} h={40}>
                <path d="M17 0h33L34 25 2 19z" fill="#adb1be" />
                <path d="M2 19c-1 4 1 7 4 8l26 6L48 9c2 2 2 3 1 5L31 38 4 31c-5-2-5-8-2-12z" fill="#adb1be" />
                <path d="M5 22l28 7L47 9" stroke="#1a2944" strokeWidth="3" />
                <path d="M21 1.500l17 3.500" stroke="#1a2944" strokeWidth="3" />
            </Svg>
            <span>The Collection Book</span>
        </Watermark>
        <Tray>
            <Svg w={14}><path d="M1.500 9.500L7 4l5.500 5.500" stroke="#fff" strokeWidth="1.300" /></Svg>
            <Svg w={18} h={16}><path d="M4 3.500h12v8H4zM6 15h8M10 12v3" stroke="#fff" strokeWidth="1.300" /><path d="M1.500 1.500h4v4h-4zM3.500 6v5" stroke="#fff" fill="#1a2944" /></Svg>
            <Svg w={18} h={16}><path d="M1 5.500h3l4-4v13l-4-4H1z" stroke="#fff" /><path d="M10 5.500q2 2.500 0 5M12.500 3.500q3.500 4.500 0 9M15 2q4.500 6 0 12" stroke="#fff" /></Svg>
            <Clock>9:26 AM<br />3/2/2019</Clock>
            <Svg w={17} h={18}><path d="M.5 1.500h16v12H11L8.500 16 6 13.500H.5z" stroke="#fff" strokeWidth="1.200" /></Svg>
            <Svg w={6} />
            <Peek />
        </Tray>
    </Taskbar>
);

const App = () => (
    <>
        <GlobalStyle />
        <Desktop>
            <ControlPanel>
                <TitleBar $height={23}>
                    <PanelIcon />
                    <TitleText>All Control Panel Items</TitleText>
                    <Caption $right={2}>
                        <CaptionButton $height={21} aria-label="Minimize"><Minimize /></CaptionButton>
                        <CaptionButton $height={21} aria-label="Restore"><Restore /></CaptionButton>
                        <CaptionButton $height={21} aria-label="Close"><Close /></CaptionButton>
                    </Caption>
                </TitleBar>
                <Address
                    icon={<PanelIcon />}
                    path={['Control Panel', 'All Control Panel Items']}
                    search="Search Control Panel"
                />
                <Heading>
                    <Adjust>Adjust your computer's settings</Adjust>
                    <ViewLabel>
                        View by:
                        <ViewSelect><option>Large icons</option></ViewSelect>
                        <Caret />
                    </ViewLabel>
                </Heading>
                <Rule />
                <Items>
                    {panelItems.map((item, index) => (
                        <li key={`Item-${index}`}>
                            <Item href="#">{item.icon}{item.name}</Item>
                        </li>
                    ))}
                </Items>
            </ControlPanel>
            <Tasks />
            <Explorer />
            <ConfigDialog />
        </Desktop>
    </>
);

export default App;
